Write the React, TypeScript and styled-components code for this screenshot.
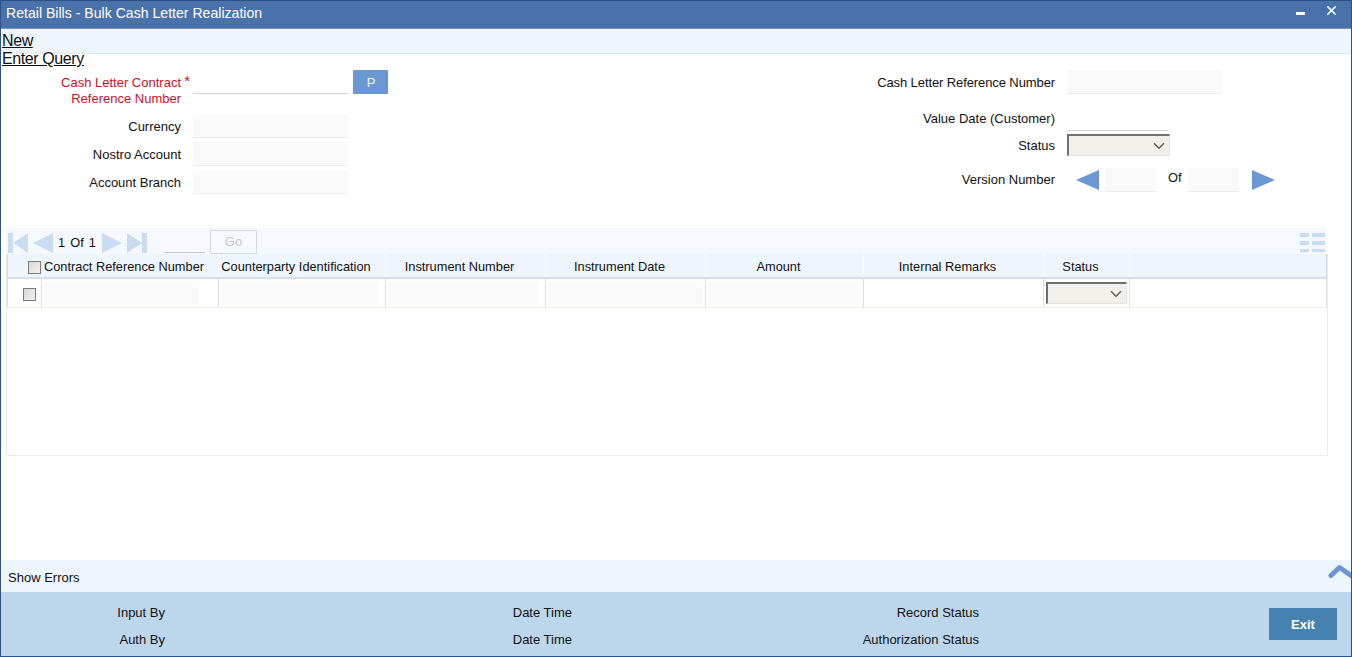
import React from 'react';
import styled, { createGlobalStyle } from 'styled-components';
import { ChevronDown, X } from 'lucide-react';

const GlobalStyle = createGlobalStyle`
  html, body {
    margin: 0;
    padding: 0;
    background: #fff;
  }
  * {
    box-sizing: border-box;
  }
`;

const Window = styled.div`
  width: 1352px;
  height: 657px;
  display: flex;
  flex-direction: column;
  border: 1px solid #2c5288;
  font-family: 'Liberation Sans', Arial, sans-serif;
  font-size: 13px;
  color: #111;
  overflow: hidden;
`;

const TitleBar = styled.div`
  height: 28px;
  flex: none;
  display: flex;
  align-items: center;
  justify-content: space-between;
  padding: 0 12px 4px 5px;
  background: #4a72aa;
  border-bottom: 1px solid #7d93b3;
  color: #fff;
  font-size: 14.1px;
`;

const WindowButtons = styled.div`
  display: flex;
  align-items: flex-start;
  gap: 19px;
  height: 24px;
  padding-top: 2px;
`;

const MinimizeIcon = styled.span`
  width: 9px;
  height: 3px;
  margin-top: 9px;
  background: #fff;
`;

const Menu = styled.div`
  height: 25px;
  flex: none;
  padding: 3px 0 0 1px;
  background: #eef5fd;
  border-bottom: 1px solid #e4e9ef;
`;

const MenuLink = styled.a`
  display: block;
  font-size: 16px;
  letter-spacing: -0.4px;
  line-height: 18px;
  color: #111;
  text-decoration: underline;
`;

const FormArea = styled.div`
  height: 174px;
  flex: none;
  display: flex;
  gap: 466px;
  padding-top: 16px;
`;

const FormColumn = styled.div<{ $width: number }>`
  width: ${({ $width }) => $width}px;
  display: flex;
  flex-direction: column;
`;

const Row = styled.div<{ $height: number; $align?: string }>`
  height: ${({ $height }) => $height}px;
  display: flex;
  align-items: ${({ $align }) => $align || 'center'};
  gap: 12px;
`;

const Label = styled.label<{ $width: number; $required?: boolean; $drop?: number }>`
  width: ${({ $width }) => $width}px;
  flex: none;
  padding-top: ${({ $drop }) => $drop || 0}px;
  text-align: right;
  line-height: 16px;
  color: ${({ $required }) => ($required ? '#c8102e' : '#111')};
`;

const LabelBlock = styled(Label)`
  position: relative;
  padding-top: 5px;
`;

const TightLabel = styled(LabelBlock)`
  letter-spacing: -0.1px;
`;

const Star = styled.span`
  position: absolute;
  right: -9px;
  top: 3px;
  font-size: 15px;
  color: #c8102e;
`;

const Field = styled.div<{ $width: number; $empty?: boolean }>`
  width: ${({ $width }) => $width}px;
  height: 24px;
  flex: none;
  background: ${({ $empty }) => ($empty ? '#fff' : '#fafafa')};
  border-bottom: 1px solid ${({ $empty }) => ($empty ? '#d4d4d4' : '#ececec')};
`;

const PickButton = styled.button`
  width: 35px;
  height: 24px;
  margin-left: -7px;
  border: 0;
  padding: 0 0 0 1px;
  background: #6b98d2;
  color: #f3f6fb;
  font: inherit;
`;

const SelectBox = styled.div<{ $width: number }>`
  width: ${({ $width }) => $width}px;
  height: 22px;
  flex: none;
  display: flex;
  align-items: center;
  justify-content: flex-end;
  padding-right: 1px;
  background: #f1f0eb;
  border-style: solid;
  border-width: 2px 1px 1px 2px;
  border-color: #6f6f6f #e2e2e2 #e2e2e2 #6f6f6f;
  color: #66625c;
`;

const VersionGroup = styled.div`
  display: flex;
  align-items: center;
`;

const OfText = styled.span`
  width: 14px;
  margin: -4px 6px 0 12px;
  font-size: 12.8px;
`;

const ArrowIcon = styled.svg<{ $margin: string }>`
  flex: none;
  margin: ${({ $margin }) => $margin};
`;

const GridSection = styled.div`
  margin: 0 24px 0 5px;
  flex: none;
`;

const Pager = styled.div`
  height: 26px;
  display: flex;
  align-items: center;
  padding: 3px 0 0 2px;
  background: #f5f9fe;
`;

const PagerText = styled.span`
  width: 39px;
  margin: 0 5px 0 5px;
  font-size: 12.8px;
  word-spacing: 1.5px;
  white-space: nowrap;
`;

const PageInput = styled.div`
  width: 41px;
  height: 21px;
  margin: 0 5px 0 17px;
  border-bottom: 1px solid #c9c9c9;
`;

const GoButton = styled.button`
  width: 47px;
  height: 24px;
  margin-top: -2px;
  padding: 0;
  background: #f5f9fe;
  border: 1px solid #d5d9de;
  color: #c5c8cc;
  font: inherit;
`;

const ListIcon = styled.svg`
  margin-left: auto;
  margin-right: 1px;
`;

const GridTable = styled.div`
  height: 202px;
  width: 1322px;
  border: 1px solid #ececec;
  border-top: 0;
`;

const columns = '35px 177px 167px 160px 160px 158px 180px 86px 197px';

const HeaderRow = styled.div`
  height: 25px;
  display: grid;
  grid-template-columns: ${columns};
  background: #eef5fd;
  border-bottom: 2px solid #d4dfec;
  font-size: 12.8px;
`;

const HeaderCell = styled.div`
  display: flex;
  align-items: center;
  justify-content: center;
  white-space: nowrap;
  padding: 2px 12px 0 0;
  border-right: 1px solid #fff;
  &:last-child {
    border-right: 1px solid #d4d8de;
  }
  &:first-child {
    border-left: 1px solid #d4d8de;
  }
`;

const HeaderCheck = styled(HeaderCell)`
  justify-content: flex-end;
  padding: 4px 1px 0 0;
  border-right: 0;
`;

const DataRow = styled.div`
  height: 29px;
  display: grid;
  grid-template-columns: ${columns};
  border-bottom: 1px solid #f4ece6;
`;

const DataCell = styled.div`
  display: flex;
  align-items: center;
  padding-left: 2px;
  border-right: 1px solid #dcdfe3;
  &:first-child {
    border-left: 1px solid #dcdfe3;
    padding: 2px 0 0 15px;
  }
`;

const CellField = styled.div<{ $width: number }>`
  width: ${({ $width }) => $width}px;
  height: 24px;
  background: #fafafa;
`;

const CheckBox = styled.span`
  width: 13px;
  height: 13px;
  display: block;
  border: 1px solid #7a7a7a;
  background: linear-gradient(135deg, #d8d8d8, #f2f2f2);
`;

const Spacer = styled.div`
  flex: 1;
`;

const ErrorBar = styled.div`
  height: 32px;
  flex: none;
  display: flex;
  align-items: center;
  justify-content: space-between;
  padding: 3px 0 0 7px;
  background: #eef5fd;
`;

const CollapseIcon = styled.svg`
  align-self: flex-start;
  margin-top: 1px;
`;

const Audit = styled.div`
  height: 64px;
  flex: none;
  display: grid;
  grid-template-columns: 164px 407px 407px 1fr;
  grid-template-rows: 27px 27px;
  padding-top: 7px;
  background: #bcd7ec;
`;

const AuditLabel = styled.div`
  display: flex;
  align-items: center;
  justify-content: flex-end;
`;

const ExitButton = styled.button`
  grid-column: 4;
  grid-row: 1 / span 2;
  width: 68px;
  height: 32px;
  margin: 9px 0 0 290px;
  border: 0;
  padding: 0;
  background: #4682b0;
  color: #fff;
  font: bold 13px 'Liberation Sans', Arial, sans-serif;
`;

const Triangle: React.FC<{ dir: 'left' | 'right'; color: string; margin: string; width?: number }> = ({
  dir,
  color,
  margin,
  width = 23,
}) => (
  <ArrowIcon $margin={margin} width={width} height="20" viewBox="0 0 23 20" preserveAspectRatio="none">
    <path d={dir === 'left' ? 'M0 10 L23 0 V20 Z' : 'M23 10 L0 0 V20 Z'} fill={color} />
  </ArrowIcon>
);

const EdgeArrow: React.FC<{ dir: 'left' | 'right'; margin: string }> = ({ dir, margin }) => (
  <ArrowIcon $margin={margin} width="20" height="20" viewBox="0 0 20 20">
    <path
      d={dir === 'left' ? 'M0 0 H5 V20 H0 Z M20 0 V20 L5 10 Z' : 'M20 0 H15 V20 H20 Z M0 0 V20 L15 10 Z'}
      fill="#cbdcf2"
    />
  </ArrowIcon>
);

const headers = [
  'Contract Reference Number',
  'Counterparty Identification',
  'Instrument Number',
  'Instrument Date',
  'Amount',
  'Internal Remarks',
  'Status',
  '',
];

const App: React.FC = () => (
  <Window>
    <GlobalStyle />
    <TitleBar>
      Retail Bills - Bulk Cash Letter Realization
      <WindowButtons>
        <MinimizeIcon />
        <X size={15} strokeWidth={2.6} color="#fff" />
      </WindowButtons>
    </TitleBar>
    <Menu>
      <MenuLink>New</MenuLink>
      <MenuLink>Enter Query</MenuLink>
    </Menu>
    <FormArea>
      <FormColumn $width={400}>
        <Row $height={42} $align="flex-start">
          <LabelBlock $width={180} $required>
            Cash Letter Contract
            <br />
            Reference Number
            <Star>*</Star>
          </LabelBlock>
          <Field $width={155} $empty />
          <PickButton>P</PickButton>
        </Row>
        <Row $height={28}>
          <Label $width={180} $drop={2}>
            Currency
          </Label>
          <Field $width={155} />
        </Row>
        <Row $height={28}>
          <Label $width={180} $drop={2}>
            Nostro Account
          </Label>
          <Field $width={155} />
        </Row>
        <Row $height={28}>
          <Label $width={180} $drop={2}>
            Account Branch
          </Label>
          <Field $width={155} />
        </Row>
      </FormColumn>
      <FormColumn $width={420}>
        <Row $height={35} $align="flex-start">
          <TightLabel $width={188}>Cash Letter Reference Number</TightLabel>
          <Field $width={155} />
        </Row>
        <Row $height={28}>
          <Label $width={188}>Value Date (Customer)</Label>
          <Field $width={101} $empty />
        </Row>
        <Row $height={24}>
          <Label $width={188} $drop={2}>
            Status
          </Label>
          <SelectBox $width={103}>
            <ChevronDown size={18} strokeWidth={2.2} />
          </SelectBox>
        </Row>
        <Row $height={45}>
          <Label $width={188}>Version Number</Label>
          <VersionGroup>
            <Triangle dir="left" color="#6b98d2" margin="0 6px 0 9px" />
            <Field $width={51} />
            <OfText>Of</OfText>
            <Field $width={51} />
            <Triangle dir="right" color="#6b98d2" margin="0 0 0 13px" />
          </VersionGroup>
        </Row>
      </FormColumn>
    </FormArea>
    <GridSection>
      <Pager>
        <EdgeArrow dir="left" margin="0" />
        <Triangle dir="left" color="#cbdcf2" margin="0 0 0 5px" width={20} />
        <PagerText>1 Of 1</PagerText>
        <Triangle dir="right" color="#cbdcf2" margin="0" width={20} />
        <EdgeArrow dir="right" margin="0 0 0 5px" />
        <PageInput />
        <GoButton>Go</GoButton>
        <ListIcon width="26" height="20" viewBox="0 0 26 20">
          <path
            d="M0 0 H9 V4 H0 Z M12 0 H25 V4 H12 Z M0 8 H9 V12 H0 Z M12 8 H25 V12 H12 Z M0 16 H9 V19 H0 Z M12 16 H25 V19 H12 Z"
            fill="#cbdcf2"
          />
        </ListIcon>
      </Pager>
      <GridTable>
        <HeaderRow>
          <HeaderCheck>
            <CheckBox />
          </HeaderCheck>
          {headers.map((h, i) => (
            <HeaderCell key={`header_${i}`}>{h}</HeaderCell>
          ))}
        </HeaderRow>
        <DataRow>
          <DataCell>
            <CheckBox />
          </DataCell>
          <DataCell>
            <CellField $width={155} />
          </DataCell>
          <DataCell>
            <CellField $width={157} />
          </DataCell>
          <DataCell>
            <CellField $width={150} />
          </DataCell>
          <DataCell>
            <CellField $width={155} />
          </DataCell>
          <DataCell>
            <CellField $width={150} />
          </DataCell>
          <DataCell />
          <DataCell>
            <SelectBox $width={81}>
              <ChevronDown size={18} strokeWidth={2.2} />
            </SelectBox>
          </DataCell>
          <DataCell />
        </DataRow>
      </GridTable>
    </GridSection>
    <Spacer />
    <ErrorBar>
      Show Errors
      <CollapseIcon width="23" height="15" viewBox="0 0 23 15">
        <path
          d="M3 11.5 L11.5 3.5 L23 11.5"
          fill="none"
          stroke="#6b98d2"
          strokeWidth="5"
          strokeLinecap="round"
          strokeLinejoin="round"
        />
      </CollapseIcon>
    </ErrorBar>
    <Audit>
      <AuditLabel>Input By</AuditLabel>
      <AuditLabel>Date Time</AuditLabel>
      <AuditLabel>Record Status</AuditLabel>
      <ExitButton>Exit</ExitButton>
      <AuditLabel>Auth By</AuditLabel>
      <AuditLabel>Date Time</AuditLabel>
      <AuditLabel>Authorization Status</AuditLabel>
    </Audit>
  </Window>
);

export default App;
